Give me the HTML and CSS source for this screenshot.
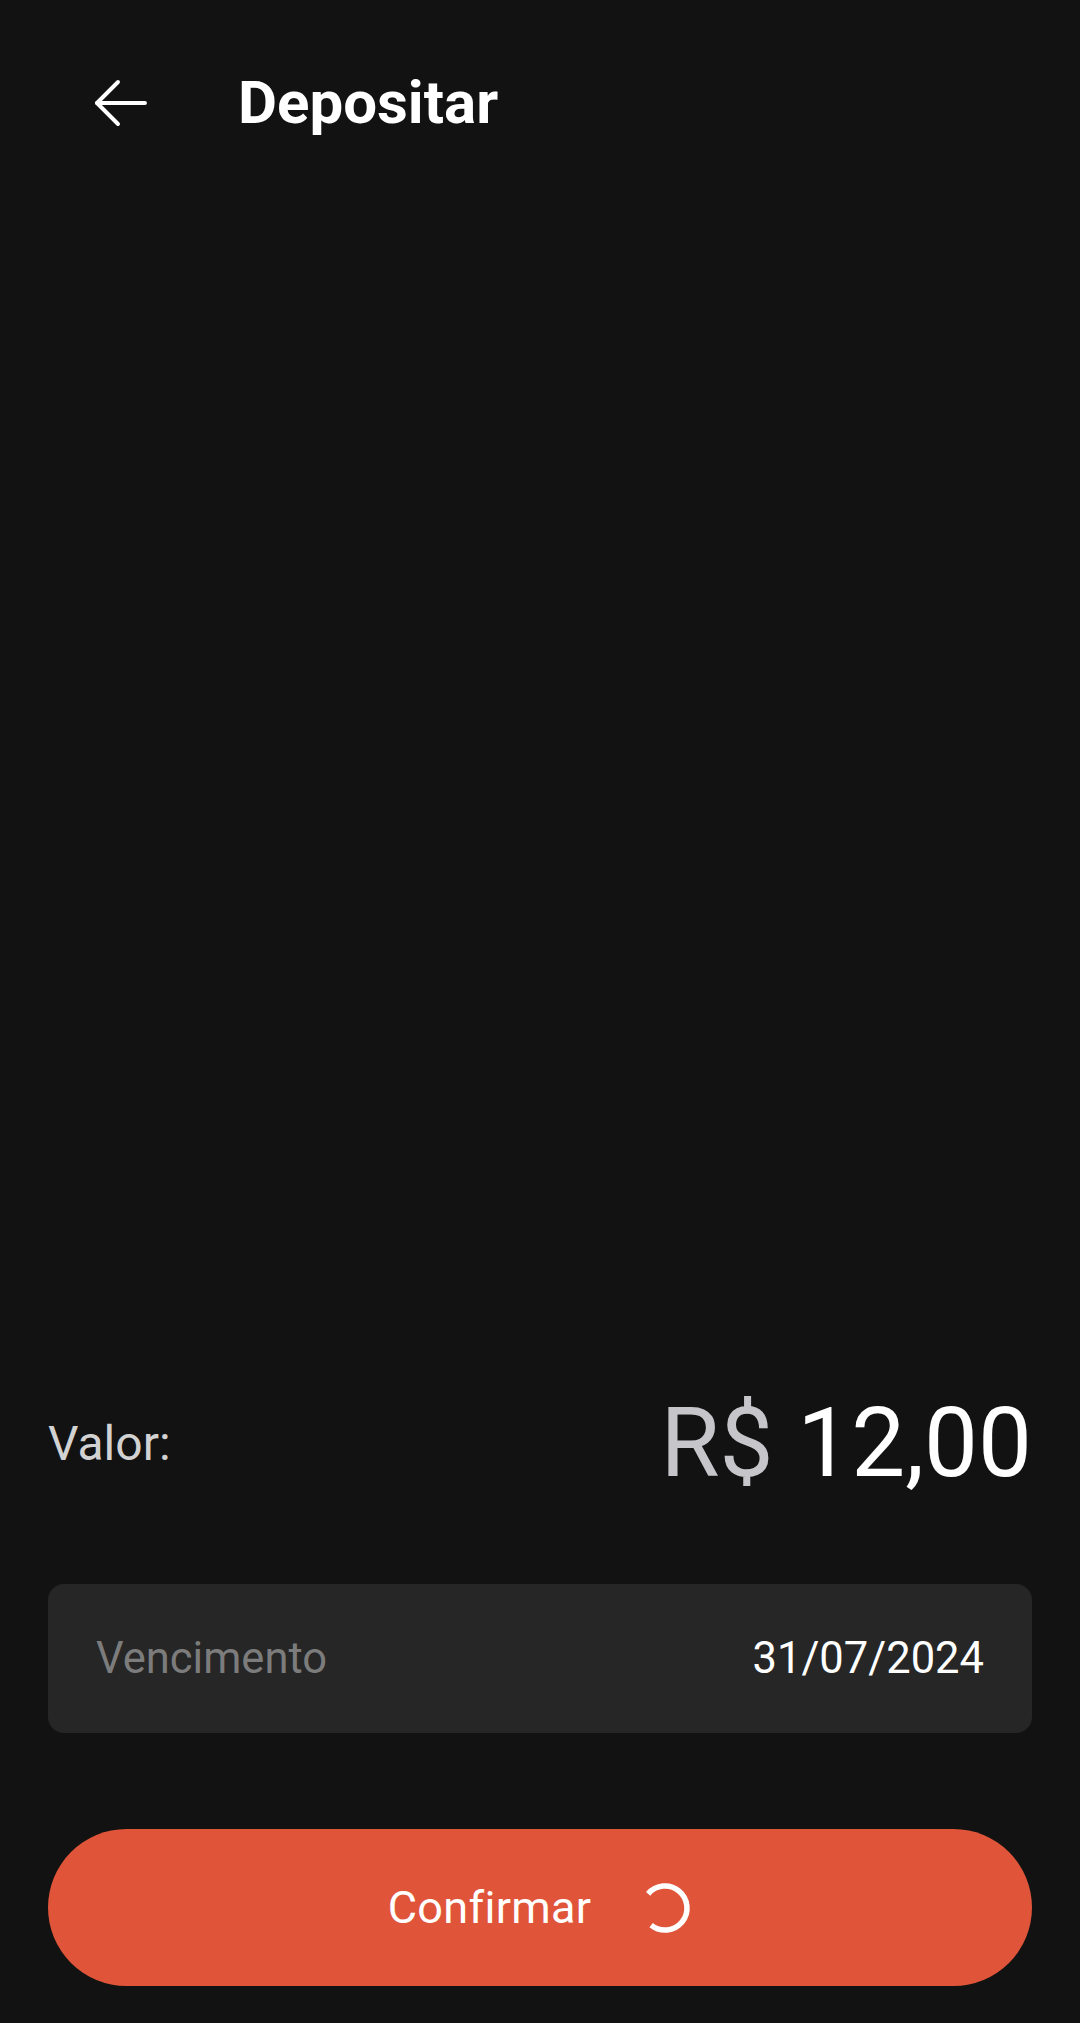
FILE: index.html
```html
<!DOCTYPE html>
<html lang="pt-BR">
<head>
    <meta charset="UTF-8">
    <meta name="viewport" content="width=device-width, initial-scale=1.0">
    <title>Depositar</title>
    <link rel="stylesheet" href="styles.css">
</head>
<body>
    <header class="app-bar">
        <span class="back-btn" aria-label="Voltar">
            <svg viewBox="0 0 24 24" width="72" height="72" fill="none" stroke="#ffffff" stroke-width="1.3" stroke-linecap="round" stroke-linejoin="round">
                <path d="M20 12H4"/>
                <path d="M11 5l-7 7 7 7"/>
            </svg>
        </span>
        <h1 class="app-title">Depositar</h1>
    </header>

    <main class="deposit">
        <!-- Valor -->
        <div class="value-row">
            <span class="value-label">Valor:</span>
            <span class="value-amount"><span class="currency">R$</span> 12,00</span>
        </div>

        <!-- Vencimento -->
        <div class="due-card">
            <span class="due-label">Vencimento</span>
            <span class="due-date">31/07/2024</span>
        </div>

        <button class="confirm-btn" type="button">
            <span>Confirmar</span>
            <svg class="spinner" viewBox="0 0 54 54" width="54" height="54" fill="none" stroke="#ffffff" stroke-width="5.5">
                <path d="M10.15 12.86 A22 22 0 1 1 13.15 44.1"/>
            </svg>
        </button>
    </main>
</body>
</html>
```

FILE: styles.css
```css
*{
    box-sizing: border-box;
}
body{
    margin: 0;
    height: 100vh;
    display: flex;
    flex-direction: column;
    background-color: #121212;
    color: #ffffff;
    font-family: Roboto, "Noto Sans", sans-serif;
}
/*
* App Bar
*/
.app-bar{
    display: flex;
    align-items: center;
    height: 206px;
    padding-left: 85px;
}
.back-btn{
    display: flex;
    width: 72px;
    height: 72px;
}
.app-title{
    margin: 0 0 0 81px;
    font-size: 60px;
    font-weight: 700;
    line-height: 1;
}
/*
* Deposit
*/
.deposit{
    margin-top: auto;
    display: flex;
    flex-direction: column;
    padding: 0 48px 37px 48px;
}
.value-row{
    display: flex;
    justify-content: space-between;
    align-items: center;
}
.value-label{
    font-size: 48px;
    color: #d2d2d2;
}
.value-amount{
    font-size: 96px;
    line-height: 1.2;
    color: #ffffff;
}
.currency{
    color: #c6c6ca;
}
.due-card{
    display: flex;
    justify-content: space-between;
    align-items: center;
    height: 149px;
    margin-top: 83px;
    padding: 0 48px;
    border-radius: 16px;
    background-color: #262626;
    font-size: 43.5px;
}
.due-label{
    color: #7c7c7c;
}
.due-date{
    color: #ffffff;
}
.confirm-btn{
    display: flex;
    justify-content: center;
    align-items: center;
    gap: 47px;
    height: 157px;
    margin-top: 96px;
    border: none;
    border-radius: 80px;
    background-color: #e0553a;
    color: #ffffff;
    font-family: inherit;
    font-size: 45px;
    letter-spacing: 0.3px;
}
```
